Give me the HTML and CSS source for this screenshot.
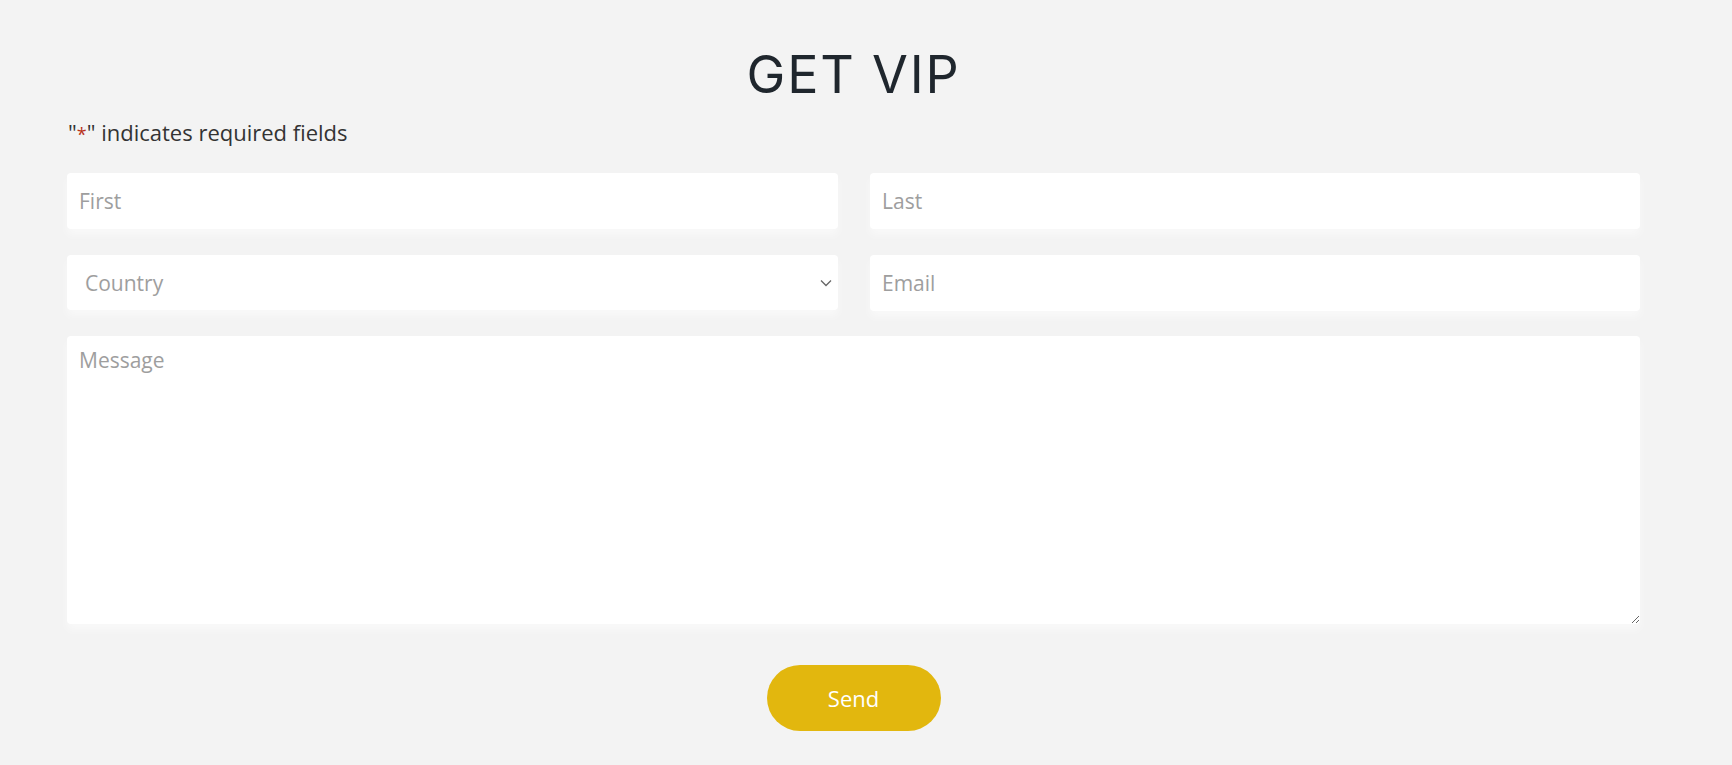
FILE: index.html
```html
<!DOCTYPE html>
<html lang="en">
<head>
<meta charset="utf-8">
<title>Get VIP</title>
<link rel="stylesheet" href="styles.css">
</head>
<body>
<main class="wrap">
  <h1 class="title">GET VIP</h1>
  <p class="note">"<span class="req">*</span>" indicates required fields</p>
  <form class="form">
    <div class="grid">
      <input class="field" type="text" placeholder="First">
      <input class="field" type="text" placeholder="Last">
      <div class="select-wrap">
        <select class="field select">
          <option>Country</option>
        </select>
        <svg class="chev" width="12" height="8" viewBox="0 0 12 8" aria-hidden="true"><path d="M1 1.5 L6 6.5 L11 1.5" fill="none" stroke="#666" stroke-width="1.3"/></svg>
      </div>
      <input class="field" type="email" placeholder="Email">
      <textarea class="field message" placeholder="Message"></textarea>
    </div>
    <div class="actions">
      <button type="button" class="send">Send</button>
    </div>
  </form>
</main>
</body>
</html>
```
FILE: styles.css
```css
* { box-sizing: border-box; }
html, body { margin: 0; padding: 0; }
body {
  background: #f3f3f3;
  font-family: "Open Sans", "Noto Sans", sans-serif;
  color: #333;
}
.wrap {
  width: 1573px;
  margin-left: 67px;
  padding-top: 44px;
}
.title {
  margin: 0;
  text-align: center;
  font-family: "Inter", "Noto Sans", sans-serif;
  font-weight: 400;
  font-size: 52px;
  line-height: 62px;
  color: #1f262d;
  letter-spacing: 1.8px;
}
.note {
  margin: 11px 0 0 1px;
  font-size: 22px;
  line-height: 30px;
  color: #333;
}
.req { color: #b8311a; font-size: 18px; }
.form { margin-top: 24px; }
.grid {
  display: grid;
  grid-template-columns: 771px 770px;
  column-gap: 32px;
  row-gap: 26px;
}
.field {
  display: block;
  width: 100%;
  height: 56px;
  border: none;
  border-radius: 4px;
  background: #fff;
  padding: 0 12px;
  font-family: "Open Sans", "Noto Sans", sans-serif;
  font-size: 21px;
  color: #333;
  outline: none;
  box-shadow: 0 6px 8px rgba(255,255,255,0.5);
}
.field::placeholder { color: #9e9e9e; opacity: 1; }
.select-wrap { position: relative; }
.select {
  appearance: none;
  -webkit-appearance: none;
  padding-left: 18px;
  color: #9e9e9e;
  height: 55px;
}
.chev {
  position: absolute;
  right: 6px;
  top: 24px;
  pointer-events: none;
}
.message {
  grid-column: 1 / span 2;
  height: 288px;
  padding: 10px 12px;
  resize: vertical;
  line-height: 28px;
  margin-top: -1px;
}
.actions {
  display: flex;
  justify-content: center;
  margin-top: 41px;
}
.send {
  width: 174px;
  height: 66px;
  border: none;
  border-radius: 33px;
  background: #e2b70e;
  color: #fff;
  font-family: "Open Sans", "Noto Sans", sans-serif;
  font-size: 22px;
  cursor: pointer;
}
```
